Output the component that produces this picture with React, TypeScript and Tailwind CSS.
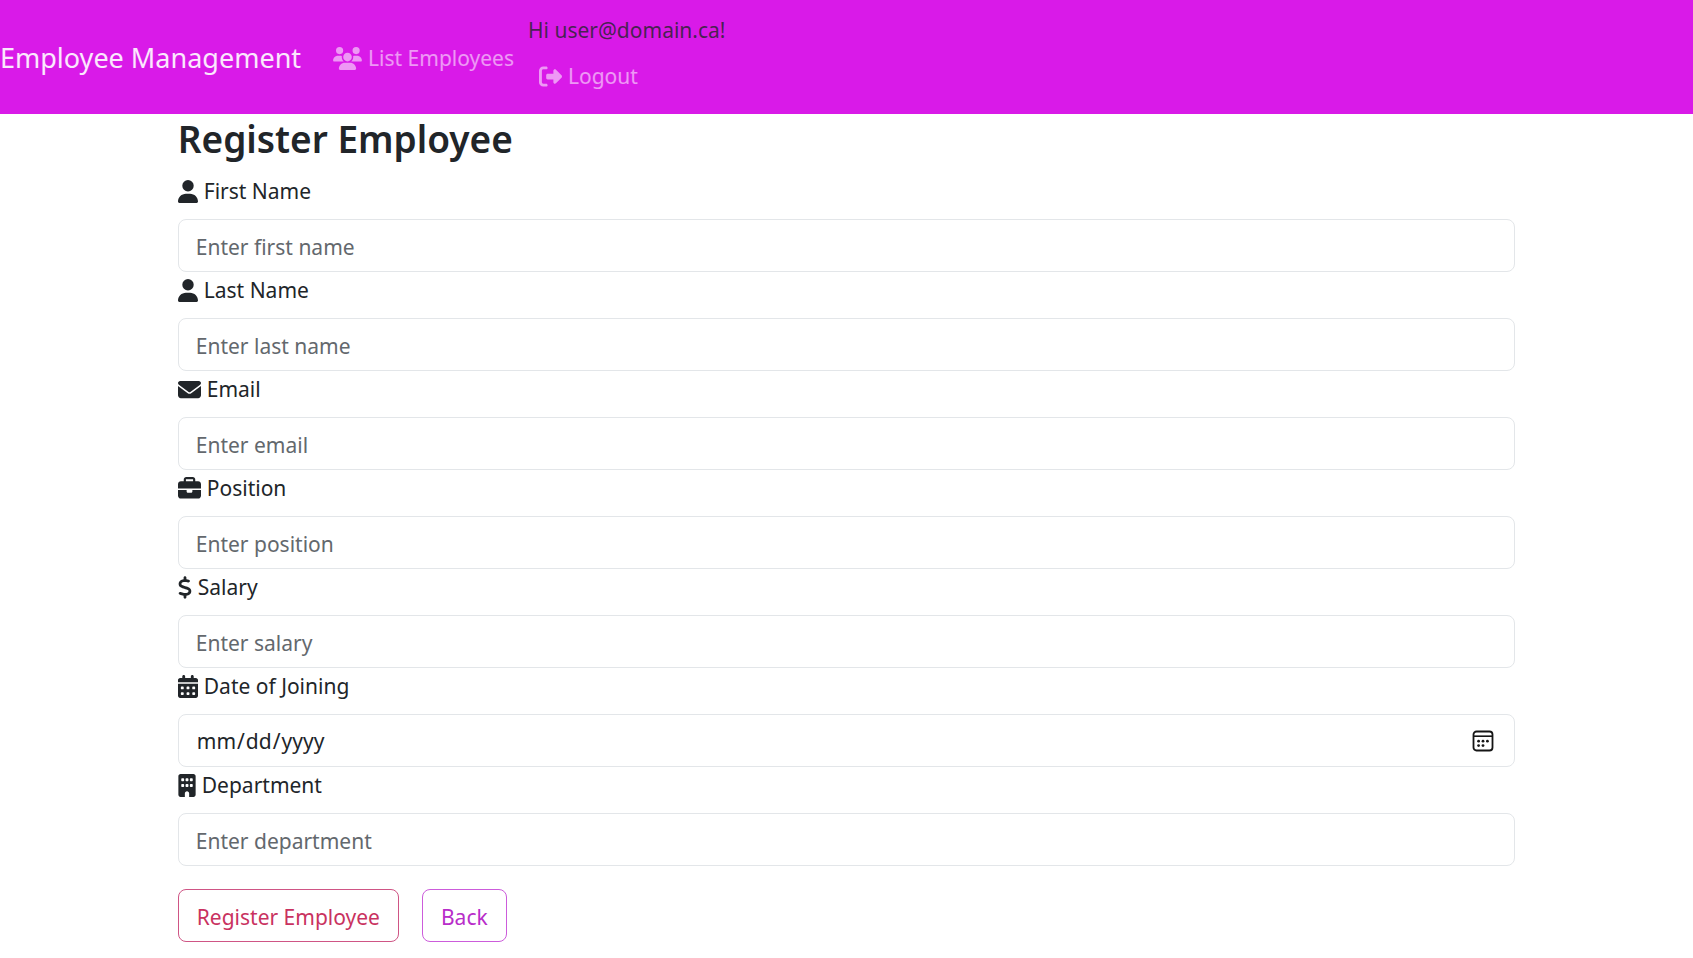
import React from "react";
import type { IconType } from "react-icons";
import {
  FaBriefcase,
  FaBuilding,
  FaCalendarDays,
  FaDollarSign,
  FaEnvelope,
  FaRightFromBracket,
  FaUser,
  FaUsers,
} from "react-icons/fa6";

type Field = {
  id: string;
  label: string;
  type: string;
  placeholder?: string;
  icon: IconType;
  iconWidth: string;
};

const fields: Field[] = [
  { id: "firstName", label: "First Name", type: "text", placeholder: "Enter first name", icon: FaUser, iconWidth: "w-[20px]" },
  { id: "lastName", label: "Last Name", type: "text", placeholder: "Enter last name", icon: FaUser, iconWidth: "w-[20px]" },
  { id: "email", label: "Email", type: "email", placeholder: "Enter email", icon: FaEnvelope, iconWidth: "w-[23px]" },
  { id: "position", label: "Position", type: "text", placeholder: "Enter position", icon: FaBriefcase, iconWidth: "w-[23px]" },
  { id: "salary", label: "Salary", type: "text", placeholder: "Enter salary", icon: FaDollarSign, iconWidth: "w-[14px]" },
  { id: "joined", label: "Date of Joining", type: "date", icon: FaCalendarDays, iconWidth: "w-[20px]" },
  { id: "department", label: "Department", type: "text", placeholder: "Enter department", icon: FaBuilding, iconWidth: "w-[18px]" },
];

function DateGlyph() {
  return (
    <svg
      className="pointer-events-none absolute top-4 right-[21px] size-[22px]"
      viewBox="0 0 22 22"
      fill="none"
      aria-hidden="true"
    >
      <rect x="1.5" y="1.5" width="19" height="19" rx="3" stroke="#151515" strokeWidth="1.8" />
      <path d="M1.5 6.2h19" stroke="#151515" strokeWidth="1.6" />
      <g fill="#151515">
        <circle cx="6.6" cy="11.2" r="1.4" />
        <circle cx="11" cy="11.2" r="1.4" />
        <circle cx="15.4" cy="11.2" r="1.4" />
        <circle cx="6.6" cy="15.6" r="1.4" />
        <circle cx="11" cy="15.6" r="1.4" />
      </g>
    </svg>
  );
}

function FormField({ field }: { field: Field }) {
  const Icon = field.icon;
  return (
    <div>
      <label htmlFor={field.id} className="mb-[10px] flex w-fit items-center gap-[6px] pt-px leading-[35px]">
        <Icon className={`h-[23px] ${field.iconWidth}`} aria-hidden="true" />
        {field.label}
      </label>
      <div className="relative">
        <input
          id={field.id}
          type={field.type}
          placeholder={field.placeholder}
          className="block h-[53px] w-full rounded-[8px] border border-[#e3e6e9] bg-white px-[17px] pt-[2px] leading-[35px] placeholder:text-[#63686d] [&::-webkit-calendar-picker-indicator]:opacity-0 [&::-webkit-datetime-edit-fields-wrapper]:p-0 [&::-webkit-datetime-edit]:p-0"
        />
        {field.type === "date" && <DateGlyph />}
      </div>
    </div>
  );
}

export default function App() {
  return (
    <div className="min-h-screen bg-white font-['Noto_Sans',sans-serif] text-[21px] leading-[34px] text-[#212529]">
      <nav className="flex h-[114px] items-center bg-[#d91ae8]">
        <a href="#" className="pt-[2px] text-[27px] text-white/90">
          Employee Management
        </a>
        <a href="#" className="ml-8 flex items-center gap-[6px] pt-[2px] text-white/55">
          <FaUsers className="h-[23px] w-[29px]" aria-hidden="true" />
          List Employees
        </a>
        <div className="ml-[14px] flex flex-col gap-3 pb-2">
          <span className="text-[#212529]/80">Hi user@domain.ca!</span>
          <a href="#" className="ml-[11px] flex w-fit items-center gap-[6px] text-white/55">
            <FaRightFromBracket className="size-[23px]" aria-hidden="true" />
            Logout
          </a>
        </div>
      </nav>

      <main className="mx-auto w-[79%]">
        <h1 className="mb-[10px] pt-px text-[37px] leading-[48px] font-semibold">Register Employee</h1>
        <form>
          {fields.map((field) => (
            <FormField key={field.id} field={field} />
          ))}
          <div className="mt-[23px] flex gap-[23px]">
            <button type="submit" className="h-[53px] rounded-[8px] border border-[#cf5585] px-[18px] pt-[2px] text-[#c93260]">
              Register Employee
            </button>
            <button type="button" className="h-[53px] rounded-[8px] border border-[#cc5cdb] px-[18px] pt-[2px] text-[#b82dc9]">
              Back
            </button>
          </div>
        </form>
      </main>
    </div>
  );
}
